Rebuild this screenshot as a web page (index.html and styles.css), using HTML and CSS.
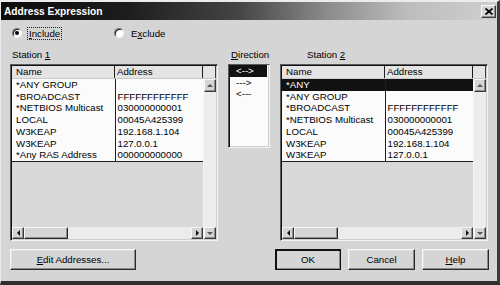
FILE: index.html
```html
<!DOCTYPE html>
<html>
<head>
<meta charset="utf-8">
<title>Address Expression</title>
<link rel="stylesheet" href="styles.css">
</head>
<body>
<div class="window">
  <div class="titlebar">
    <span class="title">Address Expression</span>
    <span class="close"><svg width="8" height="7" viewBox="0 0 8 7"><path d="M0.5 0.5 L7.5 6.5 M7.5 0.5 L0.5 6.5" stroke="#000" stroke-width="1.7" fill="none"/></svg></span>
  </div>
  <div class="content">
    <div class="radios">
      <div class="radio first"><span class="rb checked"></span><span class="rtext focus"><u>I</u>nclude</span></div>
      <div class="radio"><span class="rb"></span><span class="rtext">E<u>x</u>clude</span></div>
    </div>
    <div class="panes">
      <div class="pane station">
        <div class="lbl">Station <u>1</u></div>
        <div class="listbox">
          <div class="hdr"><div class="hc name">Name</div><div class="hc addr">Address</div><div class="hc sc"></div></div>
          <div class="rows">
            <table class="grid">
              <tr><td class="n">*ANY GROUP</td><td class="a"></td></tr>
              <tr><td class="n">*BROADCAST</td><td class="a">FFFFFFFFFFFF</td></tr>
              <tr><td class="n">*NETBIOS Multicast</td><td class="a">030000000001</td></tr>
              <tr><td class="n">LOCAL</td><td class="a">00045A425399</td></tr>
              <tr><td class="n">W3KEAP</td><td class="a">192.168.1.104</td></tr>
              <tr><td class="n">W3KEAP</td><td class="a">127.0.0.1</td></tr>
              <tr><td class="n">*Any RAS Address</td><td class="a">000000000000</td></tr>
            </table>
          </div>
          <div class="vscroll"><div class="sbtn"><span class="arr up"></span></div><div class="track"></div><div class="sbtn"><span class="arr down"></span></div></div>
          <div class="hscroll"><div class="sbtn"><span class="arr left"></span></div><div class="thumb"></div><div class="track"></div><div class="sbtn"><span class="arr right"></span></div></div>
        </div>
      </div>
      <div class="pane direction">
        <div class="lbl dlbl"><u>D</u>irection</div>
        <div class="dirbox">
          <div class="ditem sel">&lt;--&gt;</div>
          <div class="ditem">---&gt;</div>
          <div class="ditem">&lt;---</div>
        </div>
      </div>
      <div class="pane station">
        <div class="lbl slbl2">Station <u>2</u></div>
        <div class="listbox">
          <div class="hdr"><div class="hc name">Name</div><div class="hc addr">Address</div><div class="hc sc"></div></div>
          <div class="rows">
            <table class="grid">
              <tr class="sel"><td class="n">*ANY</td><td class="a"></td></tr>
              <tr><td class="n">*ANY GROUP</td><td class="a"></td></tr>
              <tr><td class="n">*BROADCAST</td><td class="a">FFFFFFFFFFFF</td></tr>
              <tr><td class="n">*NETBIOS Multicast</td><td class="a">030000000001</td></tr>
              <tr><td class="n">LOCAL</td><td class="a">00045A425399</td></tr>
              <tr><td class="n">W3KEAP</td><td class="a">192.168.1.104</td></tr>
              <tr><td class="n">W3KEAP</td><td class="a">127.0.0.1</td></tr>
            </table>
          </div>
          <div class="vscroll"><div class="sbtn"><span class="arr up"></span></div><div class="track"></div><div class="sbtn"><span class="arr down"></span></div></div>
          <div class="hscroll"><div class="sbtn"><span class="arr left"></span></div><div class="thumb"></div><div class="track"></div><div class="sbtn"><span class="arr right"></span></div></div>
        </div>
      </div>
    </div>
    <div class="buttons">
      <div class="btn edit"><span><u>E</u>dit Addresses...</span></div>
      <div class="btn ok default"><span>OK</span></div>
      <div class="btn"><span>Cancel</span></div>
      <div class="btn"><span><u>H</u>elp</span></div>
    </div>
  </div>
</div>
</body>
</html>
```

FILE: styles.css
```css
* { box-sizing: border-box; }
html, body { margin: 0; padding: 0; background: #d5d5d5; }
body { width: 500px; height: 285px; overflow: hidden; font-family: "Liberation Sans", Arial, sans-serif; font-size: 9.7px; color: #000; }
u { text-decoration: underline; text-underline-offset: 1px; }

.window {
  width: 500px; height: 285px;
  background: #d5d5d5;
  border-top: 2px solid #ececec;
  border-left: 1px solid #ececec;
  border-right: 3px solid #3a3a3a;
  border-bottom: 4px solid #2e2e2e;
  display: flex; flex-direction: column;
}

.titlebar {
  height: 18px;
  display: flex; align-items: center; justify-content: space-between;
  padding: 0 1px 0 3px;
  background: linear-gradient(to right, #0c0c0c 0%, #1c1c1c 25%, #454545 48%, #8c8c8c 66%, #bdbdbd 82%, #cfcfcf 100%);
}
.title { color: #fff; font-weight: bold; font-size: 10.2px; }
.close {
  width: 15px; height: 13px;
  background: #d5d5d5;
  border: 1px solid; border-color: #fafafa #3a3a3a #3a3a3a #fafafa;
  box-shadow: inset -1px -1px #909090;
  display: flex; align-items: center; justify-content: center;
}
.close svg { display: block; }

.content { flex: 1; display: flex; flex-direction: column; padding: 7px 0 0 9px; }

.radios { display: flex; align-items: center; height: 12px; padding-left: 2px; }
.radio { display: flex; align-items: center; }
.radio.first { width: 102px; }
.rb {
  width: 10px; height: 10px; border-radius: 50%;
  background: #fff;
  border: 1px solid; border-color: #707070 #f4f4f4 #f4f4f4 #707070;
  box-shadow: inset 1px 1px #222;
  display: flex; align-items: center; justify-content: center;
}
.rb.checked::after { content: ""; width: 4px; height: 4px; border-radius: 50%; background: #000; }
.rtext { margin-left: 5px; padding: 0 1px; line-height: 11px; border: 1px solid transparent; }
.rtext.focus { border: 1px dotted #222; }

.panes { display: flex; gap: 10px; margin-top: 10px; }
.pane { display: flex; flex-direction: column; }
.station { width: 208px; }
.direction { width: 42px; }
.lbl { height: 12px; line-height: 12px; margin-bottom: 3px; padding-left: 2px; }
.dlbl { padding-left: 3px; }
.slbl2 { padding-left: 27px; }

.listbox {
  height: 177px;
  border: 1px solid; border-color: #5a5a5a #f2f2f2 #f2f2f2 #5a5a5a;
  box-shadow: inset 1px 1px #111, inset -1px -1px #cfcfcf;
  padding: 1px;
  display: grid;
  grid-template-columns: 191px 13px;
  grid-template-rows: 13px 1fr 12px;
  background: #d9d9d9;
}
.hdr { grid-column: 1 / 3; grid-row: 1; display: flex; background: #e4e4e4; border-bottom: 1px solid #cacaca; }
.hc { height: 100%; line-height: 12px; border-right: 1px solid #1e1e1e; }
.hc.name { width: 103px; padding-left: 4px; }
.hc.addr { width: 88px; padding-left: 2px; }
.hc.sc { width: 13px; border-right: 1px solid #3a3a3a; }

.rows { grid-column: 1; grid-row: 2; overflow: hidden; }
.grid { border-collapse: collapse; table-layout: fixed; width: 191px; background: #fbfbfb; border-bottom: 1px solid #1e1e1e; }
.grid td { height: 11.7px; line-height: 11.7px; padding: 0; white-space: nowrap; overflow: hidden; }
.grid td.n { width: 103px; padding-left: 4px; border-right: 1px solid #1e1e1e; }
.grid td.a { width: 88px; padding-left: 2px; }
.grid tr.sel td { background: #111; color: #fff; }

.vscroll { grid-column: 2; grid-row: 2 / 4; display: flex; flex-direction: column; background: #ececec; border-left: 1px solid #f4f4f4; }
.vscroll .sbtn { height: 13px; }
.vscroll .sbtn:last-child { height: 12px; }
.vscroll .track { flex: 1; }
.hscroll { grid-column: 1; grid-row: 3; display: flex; background: #ececec; }
.hscroll .sbtn { width: 12px; }
.hscroll .track { flex: 1; }

.sbtn {
  background: #d5d5d5;
  border: 1px solid; border-color: #f6f6f6 #3a3a3a #3a3a3a #f6f6f6;
  box-shadow: inset -1px -1px #8c8c8c;
  display: flex; align-items: center; justify-content: center;
}
.thumb {
  width: 44px;
  background: #d5d5d5;
  border: 1px solid; border-color: #f6f6f6 #2a2a2a #2a2a2a #f6f6f6;
  box-shadow: inset -1px -1px #8c8c8c;
}
.arr { width: 0; height: 0; border: 3px solid transparent; }
.arr.up { border-bottom: 3px solid #555; border-top-width: 0; }
.arr.down { border-top: 3px solid #555; border-bottom-width: 0; }
.arr.left { border-right: 3px solid #111; border-left-width: 0; }
.arr.right { border-left: 3px solid #111; border-right-width: 0; }

.dirbox {
  height: 84px;
  background: #fbfbfb;
  border: 1px solid; border-color: #5a5a5a #f2f2f2 #f2f2f2 #5a5a5a;
  box-shadow: inset 1px 0 #111, inset -1px -1px #cfcfcf;
  padding: 0 2px 0 1px;
}
.ditem { height: 11.7px; line-height: 11.7px; padding-left: 6px; white-space: nowrap; }
.ditem.sel { background: #111; color: #fff; }

.buttons { display: flex; gap: 7px; margin-top: 8px; padding-right: 8px; }
.btn {
  width: 67px; height: 21px;
  background: #d5d5d5;
  border: 1px solid; border-color: #f6f6f6 #2c2c2c #2c2c2c #f6f6f6;
  box-shadow: inset -1px -1px #8a8a8a, inset 1px 1px #e2e2e2;
  display: flex; align-items: center; justify-content: center;
  line-height: 12px;
}
.btn.edit { width: 126px; margin-right: auto; }
.btn.ok { width: 66px; }
.btn.default { border-color: #f6f6f6 #111 #111 #f6f6f6; outline: 1px solid #111; outline-offset: -1px; box-shadow: inset 1px 1px #111, inset -1px -1px #8a8a8a; }
```
